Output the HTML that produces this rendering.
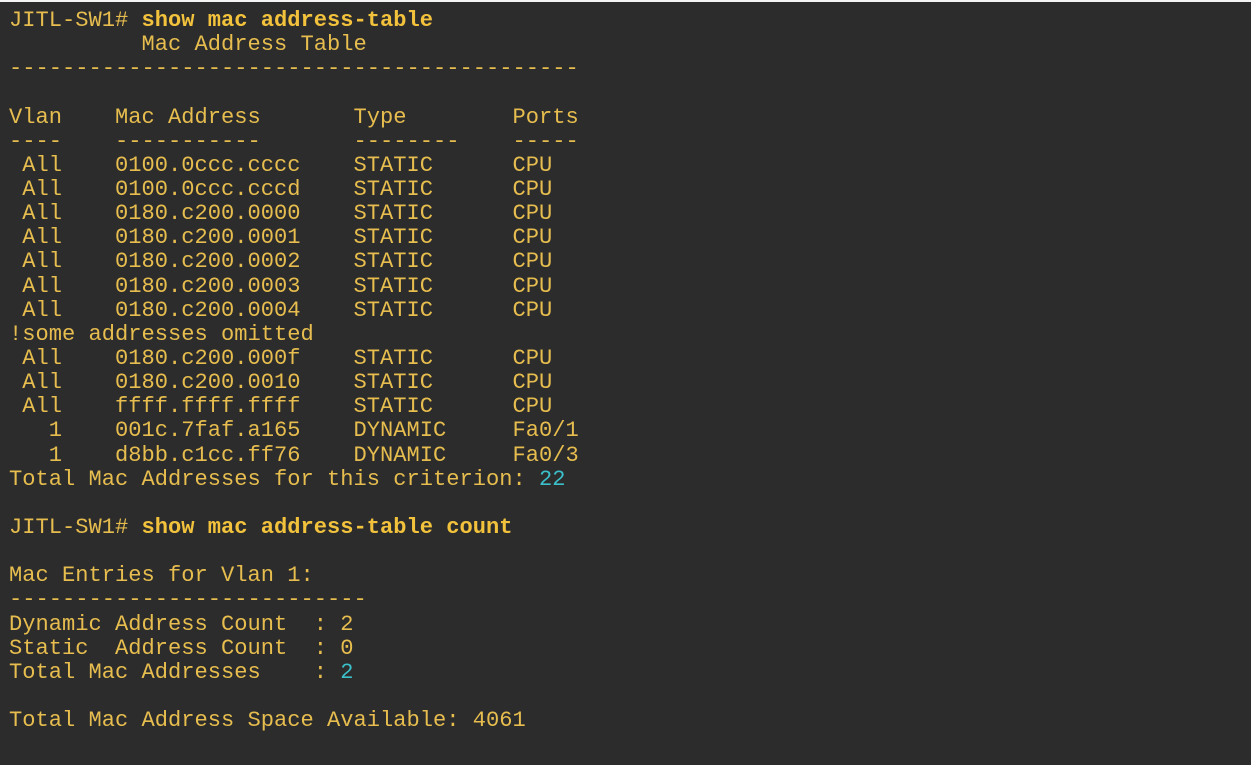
<!DOCTYPE html>
<html><head><meta charset="utf-8"><style>
html,body{margin:0;padding:0;width:1251px;height:765px;overflow:hidden;background:#2c2c2c;}
.top{position:absolute;left:0;top:0;width:1251px;height:2px;background:#f4f4f4;}
pre{position:absolute;left:9px;top:9px;margin:0;font-family:"Liberation Mono",monospace;font-size:22.08px;line-height:24.14px;color:#e6bd4e;}
b{color:#f2c23c;font-weight:bold;}
.c{color:#3bbfca;}
</style></head><body><div class="top"></div><pre>JITL-SW1# <b>show mac address-table</b>
          Mac Address Table
-------------------------------------------

Vlan    Mac Address       Type        Ports
----    -----------       --------    -----
 All    0100.0ccc.cccc    STATIC      CPU
 All    0100.0ccc.cccd    STATIC      CPU
 All    0180.c200.0000    STATIC      CPU
 All    0180.c200.0001    STATIC      CPU
 All    0180.c200.0002    STATIC      CPU
 All    0180.c200.0003    STATIC      CPU
 All    0180.c200.0004    STATIC      CPU
!some addresses omitted
 All    0180.c200.000f    STATIC      CPU
 All    0180.c200.0010    STATIC      CPU
 All    ffff.ffff.ffff    STATIC      CPU
   1    001c.7faf.a165    DYNAMIC     Fa0/1
   1    d8bb.c1cc.ff76    DYNAMIC     Fa0/3
Total Mac Addresses for this criterion: <span class="c">22</span>

JITL-SW1# <b>show mac address-table count</b>

Mac Entries for Vlan 1:
---------------------------
Dynamic Address Count  : 2
Static  Address Count  : 0
Total Mac Addresses    : <span class="c">2</span>

Total Mac Address Space Available: 4061</pre></body></html>
